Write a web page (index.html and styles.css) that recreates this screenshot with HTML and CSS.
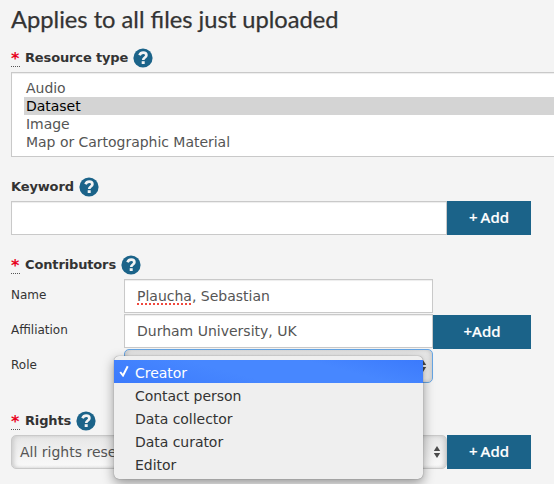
FILE: index.html
```html
<!DOCTYPE html>
<html lang="en">
<head>
<meta charset="utf-8">
<title>Upload details</title>
<link rel="stylesheet" href="styles.css">
</head>
<body>
<svg class="defs" width="0" height="0" aria-hidden="true">
  <symbol id="help" viewBox="0 0 20 20">
    <circle cx="10" cy="10" r="9.6" fill="#1b6389"/>
    <path d="M6.5 7.3C7.3 5.3 8.6 4.7 10.2 4.7C12.2 4.7 13.4 5.8 13.4 7.3C13.4 9.6 10.2 9.4 10.2 12" fill="none" stroke="#f4f4f4" stroke-width="2.7"/>
    <rect x="8.7" y="13.2" width="3" height="2.8" fill="#f4f4f4"/>
  </symbol>
  <symbol id="arrows" viewBox="0 0 8 14">
    <path d="M4 1L7.2 6H.8zM4 13L.8 8h6.4z" fill="#4b4b4b"/>
  </symbol>
</svg>
<main class="form">
  <h1 class="title">Applies to all files just uploaded</h1>

  <section class="group resource">
    <div class="label"><abbr class="req">*</abbr><span>Resource type</span><svg class="help"><use href="#help"/></svg></div>
    <ul class="listbox">
      <li>Audio</li>
      <li class="selected">Dataset</li>
      <li>Image</li>
      <li>Map or Cartographic Material</li>
    </ul>
  </section>

  <section class="group keyword">
    <div class="label"><span>Keyword</span><svg class="help"><use href="#help"/></svg></div>
    <div class="row">
      <div class="input wide"></div>
      <div class="button"><span class="plus">+</span>Add</div>
    </div>
  </section>

  <section class="group contributors">
    <div class="label"><abbr class="req">*</abbr><span>Contributors</span><svg class="help"><use href="#help"/></svg></div>
    <div class="row person">
      <span class="caption">Name</span>
      <div class="input"><span class="misspelt">Plaucha</span>, Sebastian</div>
    </div>
    <div class="row person">
      <span class="caption">Affiliation</span>
      <div class="input">Durham University, UK</div>
      <div class="button large">+Add</div>
    </div>
    <div class="row person">
      <span class="caption">Role</span>
      <div class="select focused">
        <svg class="arrows"><use href="#arrows"/></svg>
        <ul class="menu">
          <li class="active"><svg class="check" viewBox="0 0 10 12"><path d="M1.2 7L4 10.5L8.7 1.2" fill="none" stroke="#fff" stroke-width="2"/></svg>Creator</li>
          <li>Contact person</li>
          <li>Data collector</li>
          <li>Data curator</li>
          <li>Editor</li>
        </ul>
      </div>
    </div>
  </section>

  <section class="group rights">
    <div class="label"><abbr class="req">*</abbr><span>Rights</span><svg class="help"><use href="#help"/></svg></div>
    <div class="row">
      <div class="select wide">All rights reserved<svg class="arrows"><use href="#arrows"/></svg></div>
      <div class="button"><span class="plus">+</span>Add</div>
    </div>
  </section>
</main>
</body>
</html>
```
FILE: styles.css
```css
* { box-sizing: border-box; }
body {
  margin: 0;
  height: 484px;
  overflow: hidden;
  background: #f4f4f4;
  color: #333;
  font: 14px/18px "DejaVu Sans", Verdana, sans-serif;
}
ul { margin: 0; padding: 0; list-style: none; }
.defs { position: absolute; }
.form { padding-left: 11px; width: 580px; }
.title {
  margin: 0;
  height: 44px;
  font: 400 23.7px/38px Lato, sans-serif;
  -webkit-text-stroke: .25px #333;
  white-space: nowrap;
}
.group { display: flex; flex-direction: column; }
.label {
  display: flex;
  align-items: center;
  height: 28px;
  font-size: 13px;
  font-weight: bold;
  letter-spacing: -.14px;
  white-space: nowrap;
}
.req {
  width: 9px;
  height: 17px;
  margin-right: 5px;
  font-size: 16px;
  line-height: 18px;
  color: #e8001c;
  border-bottom: 1px dotted #555;
}
.help { flex: none; width: 20px; height: 20px; margin-left: 5px; }
.listbox {
  height: 85px;
  padding: 6px 12px;
  background: #fff;
  border: 1px solid #c9c9c9;
  box-shadow: inset 0 1px 1px rgba(0, 0, 0, .075);
  color: #555;
}
.listbox li { height: 18px; padding-left: 2px; letter-spacing: -.03px; }
.listbox .selected { background: #d4d4d4; color: #000; }
.keyword { margin-top: 16px; }
.contributors { margin-top: 16px; }
.rights { margin-top: 23px; }
.row { display: flex; height: 34px; }
.input, .select {
  position: relative;
  width: 309px;
  height: 34px;
  padding-left: 12px;
  line-height: 32px;
  background: #fff;
  border: 1px solid #c9c9c9;
  box-shadow: inset 0 1px 1px rgba(0, 0, 0, .075);
  color: #555;
  white-space: nowrap;
}
.input.wide, .select.wide { width: 436px; }
.select {
  padding-left: 8px;
  border-radius: 5px;
  background: linear-gradient(#e6e6e6, #fafafa);
  box-shadow: inset 3px 0 4px -1px #ccc, inset -3px 0 4px -1px #ccc;
}
.select.focused { border-color: #66a5e4; }
.arrows { position: absolute; right: 5px; top: 9px; width: 8px; height: 14px; }
.person { margin-bottom: 1px; }
.caption { width: 113px; font-size: 12px; line-height: 32px; }
.misspelt {
  text-decoration: underline dotted #f0483e 2px;
  text-underline-offset: 2px;
  text-decoration-skip-ink: none;
}
.button {
  display: flex;
  justify-content: center;
  width: 84px;
  height: 34px;
  background: #1b6389;
  color: #fff;
  font: 500 15px/32px "Noto Sans", sans-serif;
  -webkit-text-stroke: .2px #fff;
}
.button.large { width: 98px; margin-top: 1px; }
.plus { margin-right: 3px; }
.menu {
  position: absolute;
  left: -11px;
  top: 6px;
  z-index: 2;
  width: 309px;
  height: 123px;
  padding: 4px 0;
  background: #efefef;
  border-radius: 5px;
  box-shadow: 0 0 1px rgba(0, 0, 0, .55), 0 4px 12px rgba(0, 0, 0, .4);
  color: #333;
}
.menu li { position: relative; height: 23px; padding-left: 21px; line-height: 26px; letter-spacing: -.04px; }
.menu .active { background: linear-gradient(15deg, #3b7afc, #4787ff 40%, #4787ff 70%, #3b7afc); color: #fff; }
.check { position: absolute; left: 5px; top: 5px; width: 10px; height: 12px; }
```
